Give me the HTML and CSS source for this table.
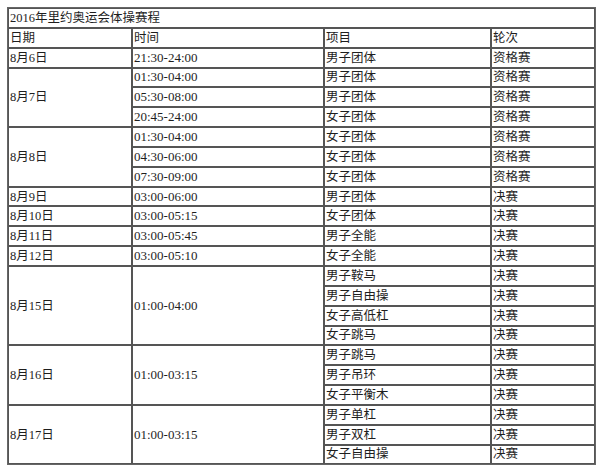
FILE: index.html
```html
<!DOCTYPE html>
<html lang="zh-CN">
<head>
<meta charset="utf-8">
<title>2016年里约奥运会体操赛程</title>
<link rel="stylesheet" href="styles.css">
</head>
<body>
<table class="sched">
<colgroup><col class="c1"><col class="c2"><col class="c3"><col class="c4"></colgroup>
<tr><td colspan="4">2016年里约奥运会体操赛程</td></tr>
<tr><td>日期</td><td>时间</td><td>项目</td><td>轮次</td></tr>
<tr><td>8月6日</td><td class="t">21:30-24:00</td><td>男子团体</td><td>资格赛</td></tr>
<tr><td rowspan="3">8月7日</td><td class="t">01:30-04:00</td><td>男子团体</td><td>资格赛</td></tr>
<tr><td class="t">05:30-08:00</td><td>男子团体</td><td>资格赛</td></tr>
<tr><td class="t">20:45-24:00</td><td>女子团体</td><td>资格赛</td></tr>
<tr><td rowspan="3">8月8日</td><td class="t">01:30-04:00</td><td>女子团体</td><td>资格赛</td></tr>
<tr><td class="t">04:30-06:00</td><td>女子团体</td><td>资格赛</td></tr>
<tr><td class="t">07:30-09:00</td><td>女子团体</td><td>资格赛</td></tr>
<tr><td>8月9日</td><td class="t">03:00-06:00</td><td>男子团体</td><td>决赛</td></tr>
<tr><td>8月10日</td><td class="t">03:00-05:15</td><td>女子团体</td><td>决赛</td></tr>
<tr><td>8月11日</td><td class="t">03:00-05:45</td><td>男子全能</td><td>决赛</td></tr>
<tr><td>8月12日</td><td class="t">03:00-05:10</td><td>女子全能</td><td>决赛</td></tr>
<tr><td rowspan="4">8月15日</td><td rowspan="4" class="t">01:00-04:00</td><td>男子鞍马</td><td>决赛</td></tr>
<tr><td>男子自由操</td><td>决赛</td></tr>
<tr><td>女子高低杠</td><td>决赛</td></tr>
<tr><td>女子跳马</td><td>决赛</td></tr>
<tr><td rowspan="3">8月16日</td><td rowspan="3" class="t">01:00-03:15</td><td>男子跳马</td><td>决赛</td></tr>
<tr><td>男子吊环</td><td>决赛</td></tr>
<tr><td>女子平衡木</td><td>决赛</td></tr>
<tr><td rowspan="3">8月17日</td><td rowspan="3" class="t">01:00-03:15</td><td>男子单杠</td><td>决赛</td></tr>
<tr><td>男子双杠</td><td>决赛</td></tr>
<tr><td>女子自由操</td><td>决赛</td></tr>
</table>
</body>
</html>
```
FILE: styles.css
```css
html, body {
  margin: 0;
  padding: 0;
  background: #fff;
}
body {
  padding: 7px 0 0 7px;
}
.sched {
  border-collapse: separate;
  border-spacing: 0;
  border: 1px solid #666;
  width: 587px;
  table-layout: fixed;
  font-family: "Liberation Serif", "Noto Sans CJK SC", serif;
  font-size: 12.5px;
  color: #1e1e1e;
}
.c1 { width: 124px; }
.c2 { width: 192px; }
.c3 { width: 167px; }
.c4 { width: 104px; }
.sched td {
  border: 1px solid #555;
  padding: 0 0 0 1px;
  height: 17.85px;
  line-height: 16px;
  vertical-align: middle;
  white-space: nowrap;
  overflow: hidden;
}
.sched td.t {
  font-size: 13px;
}
```
